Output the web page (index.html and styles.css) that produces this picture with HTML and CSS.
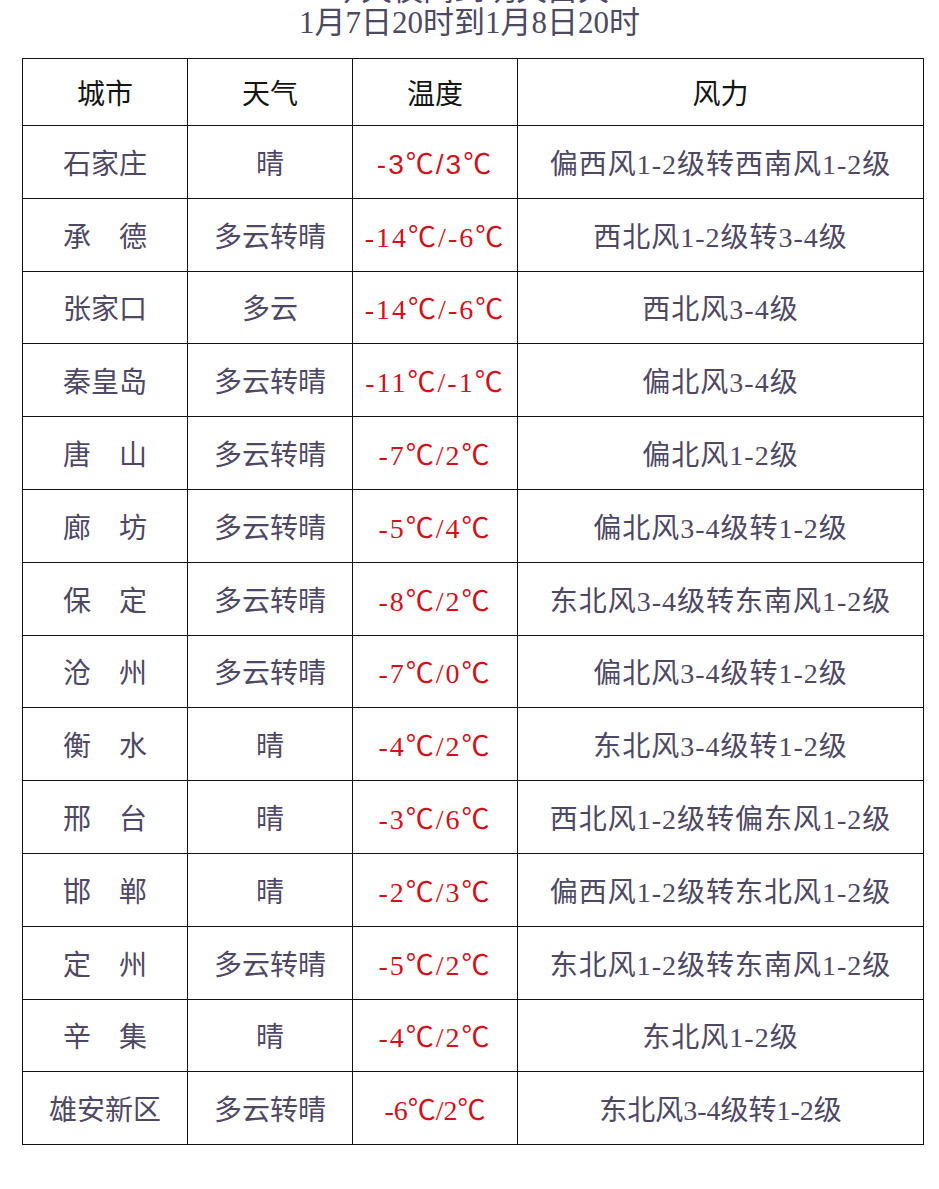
FILE: index.html
```html
<!DOCTYPE html>
<html lang="zh-CN">
<head>
<meta charset="utf-8">
<title>天气预报</title>
<link rel="stylesheet" href="styles.css">
</head>
<body>
<div class="page">
  <div class="title">
    <div class="title-line">今天夜间到明天白天</div>
    <div class="title-line">1月7日20时到1月8日20时</div>
  </div>
  <table class="forecast">
    <colgroup>
      <col class="c-city"><col class="c-wx"><col class="c-temp"><col class="c-wind">
    </colgroup>
    <thead>
      <tr><th>城市</th><th>天气</th><th>温度</th><th>风力</th></tr>
    </thead>
    <tbody>
      <tr><td>石家庄</td><td>晴</td><td class="temp sans">-3<span class="deg">℃</span>/3<span class="deg">℃</span></td><td class="wind">偏西风1-2级转西南风1-2级</td></tr>
      <tr><td>承　德</td><td>多云转晴</td><td class="temp">-14<span class="deg">℃</span>/-6<span class="deg">℃</span></td><td class="wind">西北风1-2级转3-4级</td></tr>
      <tr><td>张家口</td><td>多云</td><td class="temp">-14<span class="deg">℃</span>/-6<span class="deg">℃</span></td><td class="wind">西北风3-4级</td></tr>
      <tr><td>秦皇岛</td><td>多云转晴</td><td class="temp">-11<span class="deg">℃</span>/-1<span class="deg">℃</span></td><td class="wind">偏北风3-4级</td></tr>
      <tr><td>唐　山</td><td>多云转晴</td><td class="temp">-7<span class="deg">℃</span>/2<span class="deg">℃</span></td><td class="wind">偏北风1-2级</td></tr>
      <tr><td>廊　坊</td><td>多云转晴</td><td class="temp">-5<span class="deg">℃</span>/4<span class="deg">℃</span></td><td class="wind">偏北风3-4级转1-2级</td></tr>
      <tr><td>保　定</td><td>多云转晴</td><td class="temp">-8<span class="deg">℃</span>/2<span class="deg">℃</span></td><td class="wind">东北风3-4级转东南风1-2级</td></tr>
      <tr><td>沧　州</td><td>多云转晴</td><td class="temp">-7<span class="deg">℃</span>/0<span class="deg">℃</span></td><td class="wind">偏北风3-4级转1-2级</td></tr>
      <tr><td>衡　水</td><td>晴</td><td class="temp">-4<span class="deg">℃</span>/2<span class="deg">℃</span></td><td class="wind">东北风3-4级转1-2级</td></tr>
      <tr><td>邢　台</td><td>晴</td><td class="temp">-3<span class="deg">℃</span>/6<span class="deg">℃</span></td><td class="wind">西北风1-2级转偏东风1-2级</td></tr>
      <tr><td>邯　郸</td><td>晴</td><td class="temp">-2<span class="deg">℃</span>/3<span class="deg">℃</span></td><td class="wind">偏西风1-2级转东北风1-2级</td></tr>
      <tr><td>定　州</td><td>多云转晴</td><td class="temp">-5<span class="deg">℃</span>/2<span class="deg">℃</span></td><td class="wind">东北风1-2级转东南风1-2级</td></tr>
      <tr><td>辛　集</td><td>晴</td><td class="temp">-4<span class="deg">℃</span>/2<span class="deg">℃</span></td><td class="wind">东北风1-2级</td></tr>
      <tr class="last"><td>雄安新区</td><td>多云转晴</td><td class="temp">-6<span class="deg">℃</span>/2<span class="deg">℃</span></td><td class="wind">东北风3-4级转1-2级</td></tr>
    </tbody>
  </table>
</div>
</body>
</html>
```

FILE: styles.css
```css
html, body {
  margin: 0;
  padding: 0;
  background: #ffffff;
}

body {
  font-family: "Liberation Serif", "Noto Sans CJK SC", serif;
  color: #4e4864;
}

.page {
  width: 939px;
  height: 1189px;
  overflow: hidden;
}

.title {
  margin-top: -27px;
  text-align: center;
  color: #4c4a62;
  font-size: 31px;
  line-height: 33px;
}

.forecast {
  margin: 19px 0 0 22px;
  width: 901px;
  border-collapse: collapse;
  table-layout: fixed;
}

.c-city, .c-wx, .c-temp { width: 165px; }
.c-wind { width: 406px; }

.forecast th,
.forecast td {
  border: 1.6px solid #111111;
  text-align: center;
  vertical-align: middle;
  padding: 0;
  font-size: 28px;
  white-space: nowrap;
}

.forecast th {
  height: 66px;
  color: #141414;
  font-weight: 400;
}

.forecast td {
  height: 71.8px;
  font-weight: 400;
}

.forecast td.temp {
  color: #d0121c;
  letter-spacing: 2px;
}

.forecast td.wind {
  letter-spacing: 1px;
}

.forecast .deg {
  font-family: "Noto Sans CJK SC", sans-serif;
}

.forecast td.sans {
  font-family: "Liberation Sans", "Noto Sans CJK SC", sans-serif;
}

.forecast tr.last td {
  letter-spacing: 0;
}
```
